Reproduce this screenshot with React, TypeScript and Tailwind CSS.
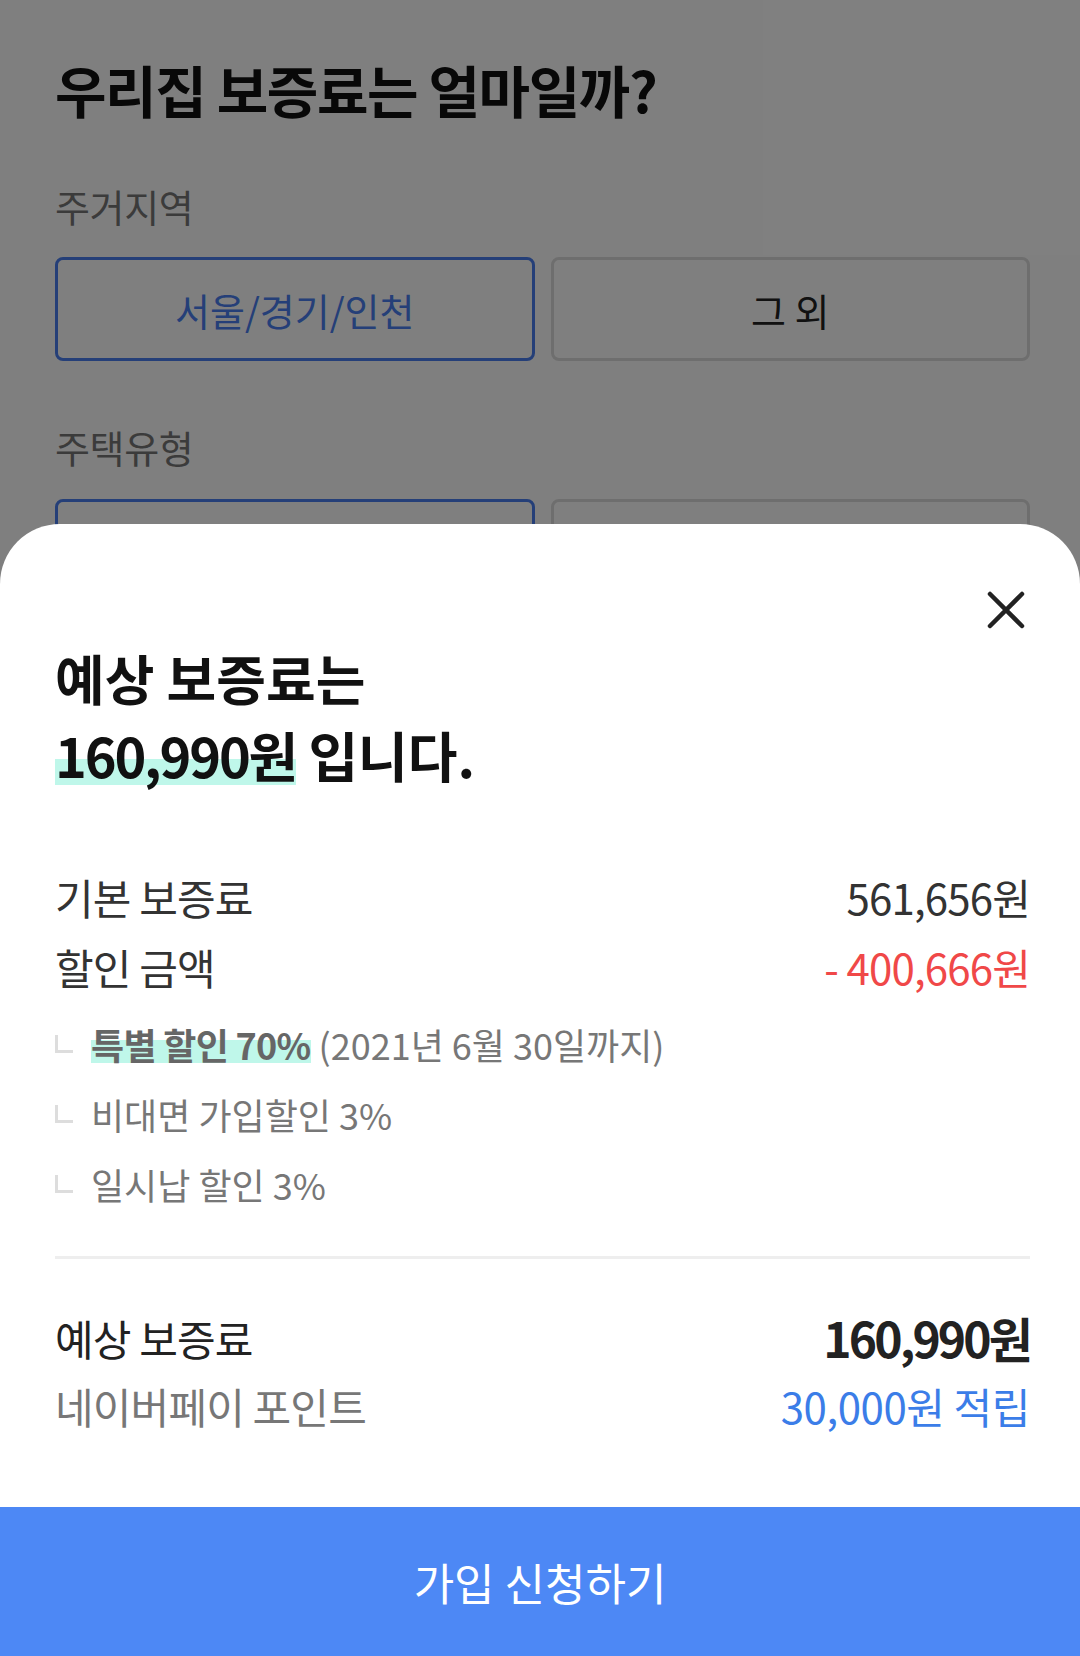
const font = { fontFamily: '"Noto Sans CJK KR", "Noto Sans", sans-serif' };

const Corner = () => (
  <svg width="18" height="18" viewBox="0 0 18 18" className="shrink-0">
    <path d="M1.5 0 V16.5 H18" fill="none" stroke="#dddddd" strokeWidth="3" />
  </svg>
);

const CloseIcon = () => (
  <svg width="40" height="40" viewBox="0 0 40 40">
    <path
      d="M4 4 L36 36 M36 4 L4 36"
      stroke="#222"
      strokeWidth="4.5"
      strokeLinecap="round"
      fill="none"
    />
  </svg>
);

const SubItem = ({ children }: { children: React.ReactNode }) => (
  <div className="flex items-center gap-[18px] h-[70px]">
    <Corner />
    <div className="text-[36px] text-[#777]">{children}</div>
  </div>
);

const App = () => {
  return (
    <div
      className="relative w-[1080px] h-[1656px] overflow-hidden bg-white"
      style={font}
    >
      {/* page behind the sheet */}
      <div className="pl-[55px] pr-[50px] pt-[51px]">
        <h1 className="text-[56px] leading-[76px] font-bold text-[#111] tracking-[-0.025em]">
          우리집 보증료는 얼마일까?
        </h1>
        <div className="mt-[54px] text-[38px] leading-[50px] text-[#777] tracking-[-0.01em]">
          주거지역
        </div>
        <div className="mt-[26px] grid grid-cols-2 gap-[16px]">
          <button className="h-[104px] rounded-[8px] border-[3px] border-[#4a7ff0] text-[38px] text-[#4a7ff0]">
            서울/경기/인천
          </button>
          <button className="h-[104px] rounded-[8px] border-[3px] border-[#dcdcdc] text-[38px] text-[#222]">
            그 외
          </button>
        </div>
        <div className="mt-[61px] text-[38px] leading-[50px] text-[#777] tracking-[-0.01em]">
          주택유형
        </div>
        <div className="mt-[27px] grid grid-cols-2 gap-[16px]">
          <button className="h-[104px] rounded-[8px] border-[3px] border-[#4a7ff0] text-[38px] text-[#4a7ff0]">
            아파트
          </button>
          <button className="h-[104px] rounded-[8px] border-[3px] border-[#dcdcdc] text-[38px] text-[#222]">
            그 외
          </button>
        </div>
      </div>

      <div className="absolute inset-0 bg-black/50" />

      {/* bottom sheet */}
      <div className="absolute left-0 right-0 bottom-0 top-[524px] bg-white rounded-t-[60px] flex flex-col">
        <div className="flex-1 pl-[55px] pr-[50px] pt-[66px]">
          <div className="flex justify-end pr-[4px]">
            <CloseIcon />
          </div>
          <h2 className="mt-[9px] text-[54px] leading-[77px] font-bold text-[#111]">
            예상 보증료는
            <br />
            <span className="tracking-[-0.04em] bg-[linear-gradient(to_bottom,transparent_56%,#bff7ea_56%,#bff7ea_89%,transparent_89%)]">
              160,990원
            </span>{" "}
            입니다.
          </h2>

          <div className="mt-[68px] flex flex-col text-[42px] tracking-[-0.02em]">
            <div className="flex justify-between items-center h-[70px]">
              <span className="text-[#333]">기본 보증료</span>
              <span className="text-[#333]">561,656원</span>
            </div>
            <div className="flex justify-between items-center h-[70px]">
              <span className="text-[#333]">할인 금액</span>
              <span className="text-[#f04848]">- 400,666원</span>
            </div>
          </div>

          <div className="mt-[8px] flex flex-col">
            <SubItem>
              <span className="font-bold text-[#666] tracking-[-0.02em] bg-[linear-gradient(to_bottom,transparent_42%,#bff7ea_42%,#bff7ea_86%,transparent_86%)]">
                특별 할인 70%
              </span>{" "}
              (2021년 6월 30일까지)
            </SubItem>
            <SubItem>비대면 가입할인 3%</SubItem>
            <SubItem>일시납 할인 3%</SubItem>
          </div>

          <div className="mt-[37px] h-[3px] bg-[#eeeeee]" />

          <div className="mt-[44px] flex flex-col text-[42px] tracking-[-0.02em]">
            <div className="flex justify-between items-center h-[68px]">
              <span className="text-[#222]">예상 보증료</span>
              <span className="text-[48px] font-bold text-[#222] tracking-[-0.06em]">
                160,990원
              </span>
            </div>
            <div className="flex justify-between items-center h-[68px]">
              <span className="text-[#777]">네이버페이 포인트</span>
              <span className="text-[#3b7de8] tracking-[-0.01em]">30,000원 적립</span>
            </div>
          </div>
        </div>

        <button className="h-[149px] w-full bg-[#4d88f5] text-white text-[44px]">
          가입 신청하기
        </button>
      </div>
    </div>
  );
};

export default App;
